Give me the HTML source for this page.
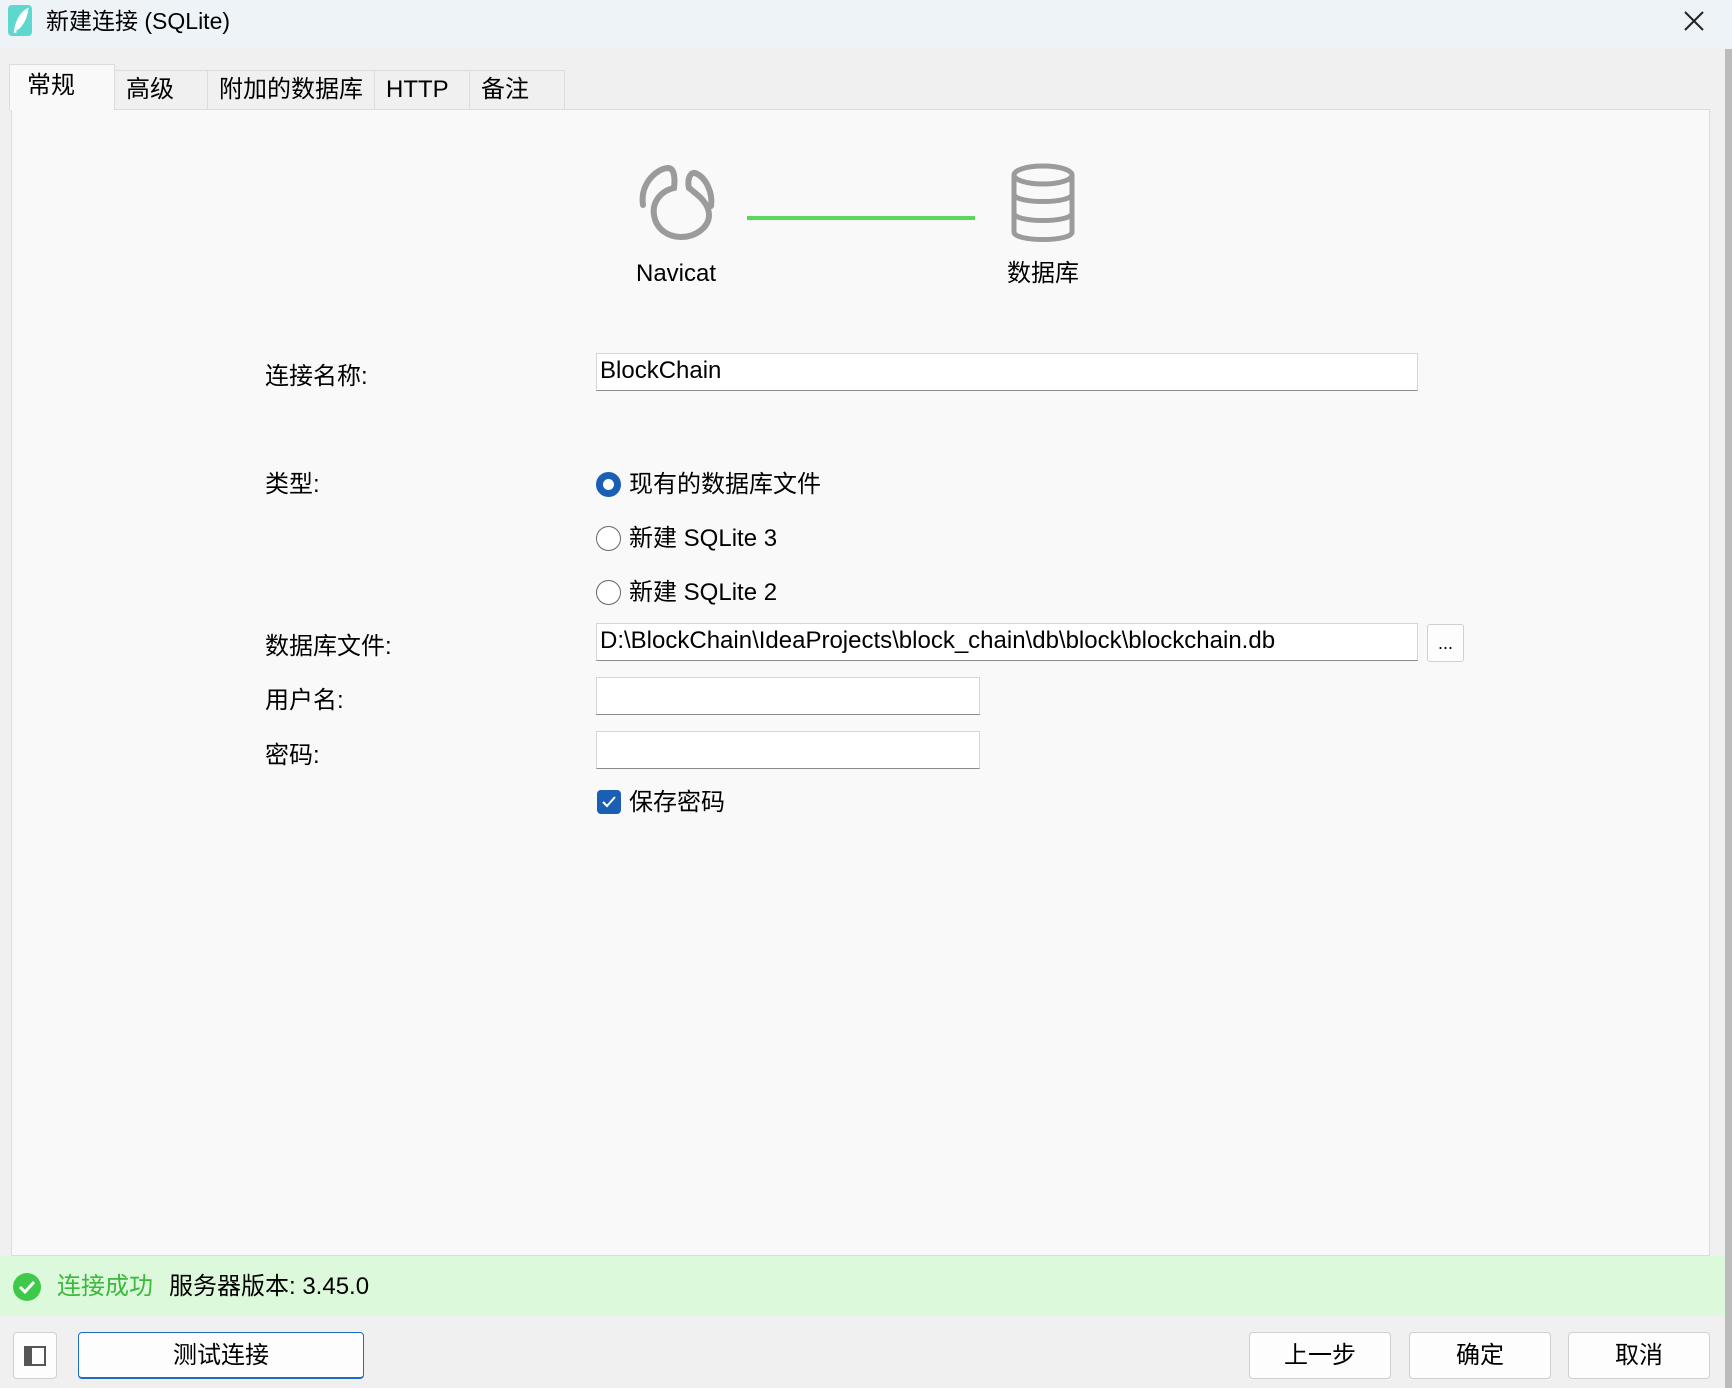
<!DOCTYPE html>
<html><head><meta charset="utf-8"><style>
*{margin:0;padding:0;box-sizing:border-box}
body{width:1732px;height:1388px;background:#f0f0f0;position:relative;overflow:hidden;font-family:"Liberation Sans","Noto Sans CJK SC",sans-serif;color:#000}
.a{position:absolute}
.t{font-size:24px;line-height:30px;white-space:nowrap}
.inp{position:absolute;background:#fff;border:1px solid #d6d6d6;border-bottom:1px solid #8a8a8a;font-size:24px;line-height:34px;padding-left:3px}
.tab{position:absolute;top:70px;height:39px;border:1px solid #dcdcdc;border-bottom:none;background:#f0f0f0;font-size:24px;line-height:38px;padding-left:11px}
.btn{position:absolute;top:1332px;height:47px;background:#fdfdfd;border:1px solid #d0d0d0;border-radius:4px;font-size:24px;line-height:45px;text-align:center}
.radio{position:absolute;width:25px;height:25px;border-radius:50%;border:1.5px solid #666;background:#fff}
</style></head><body>
<div class="a" style="left:0;top:0;width:1732px;height:49px;background:#eef3f8"></div>
<div class="a" style="left:8px;top:5px;width:24px;height:31px;background:#5ed8cf;border-radius:4px"></div>
<svg class="a" style="left:8px;top:5px" width="24" height="31"><path d="M7 28 C8 18 12 9 19 5 C18 13 14 20 9 24" stroke="#fff" stroke-width="2.5" fill="#fff"/></svg>
<div class="a t" style="left:46px;top:6px;font-size:23px">新建连接 (SQLite)</div>
<svg class="a" style="left:1682px;top:9px" width="24" height="24"><path d="M3 3L21 21M21 3L3 21" stroke="#222" stroke-width="2"/></svg>
<div class="a" style="left:1725px;top:49px;width:7px;height:1339px;background:#bbb"></div>
<div class="a" style="left:11px;top:109px;width:1699px;height:1147px;background:#f9f9f9;border:1px solid #dcdcdc"></div>
<div class="tab" style="left:114px;width:94px">高级</div>
<div class="tab" style="left:207px;width:168px">附加的数据库</div>
<div class="tab" style="left:374px;width:96px">HTTP</div>
<div class="tab" style="left:469px;width:96px">备注</div>
<div class="tab" style="left:9px;top:64px;height:46px;width:106px;background:#f9f9f9;line-height:42px;padding-left:17px">常规</div>
<svg class="a" style="left:630px;top:155px" width="100" height="95" fill="none" stroke="#9b9b9b" stroke-width="6" stroke-linecap="round">
<path d="M13 50 C10 30 25 14 38 13 C45 13 45 25 44 33 C30 36 22 48 24 60 C26 74 38 82 51 82 C66 82 79 72 79 60 C79 48 68 40 59 33 C57 25 60 17 65 18 C76 22 83 38 81 51"/>
</svg>
<div class="a" style="left:747px;top:216px;width:228px;height:4px;background:#5bd75f"></div>
<svg class="a" style="left:1010px;top:162px" width="66" height="82" fill="none" stroke="#9b9b9b" stroke-width="5">
<ellipse cx="33" cy="13" rx="29" ry="9"/><path d="M4 13V70C4 80 62 80 62 70V13M4 32C4 42 62 42 62 32M4 51C4 61 62 61 62 51"/>
</svg>
<div class="a t" style="left:636px;top:259px">Navicat</div>
<div class="a t" style="left:1007px;top:259px">数据库</div>
<div class="a t" style="left:265px;top:362px">连接名称:</div>
<div class="inp" style="left:596px;top:353px;width:822px;height:38px">BlockChain</div>
<div class="a t" style="left:265px;top:470px">类型:</div>
<div class="radio" style="left:596px;top:472px;border:7px solid #1a5fb4"></div>
<div class="a t" style="left:629px;top:470px">现有的数据库文件</div>
<div class="radio" style="left:596px;top:526px"></div>
<div class="a t" style="left:629px;top:524px">新建 SQLite 3</div>
<div class="radio" style="left:596px;top:580px"></div>
<div class="a t" style="left:629px;top:578px">新建 SQLite 2</div>
<div class="a t" style="left:265px;top:632px">数据库文件:</div>
<div class="inp" style="left:596px;top:623px;width:822px;height:38px">D:\BlockChain\IdeaProjects\block_chain\db\block\blockchain.db</div>
<div class="a" style="left:1427px;top:624px;width:37px;height:38px;background:#fdfdfd;border:1px solid #d0d0d0;border-radius:3px;text-align:center;font-size:18px;line-height:36px">...</div>
<div class="a t" style="left:265px;top:686px">用户名:</div>
<div class="inp" style="left:596px;top:677px;width:384px;height:38px"></div>
<div class="a t" style="left:265px;top:741px">密码:</div>
<div class="inp" style="left:596px;top:731px;width:384px;height:38px"></div>
<div class="a" style="left:597px;top:790px;width:24px;height:24px;background:#1a5fb4;border-radius:4px"></div>
<svg class="a" style="left:597px;top:790px" width="24" height="24"><path d="M6 12L10 16L18 7" stroke="#fff" stroke-width="2" fill="none"/></svg>
<div class="a t" style="left:629px;top:788px">保存密码</div>
<div class="a" style="left:0;top:1256px;width:1725px;height:60px;background:#dcf9dc"></div>
<div class="a" style="left:13px;top:1273px;width:28px;height:28px;border-radius:50%;background:#3ec94a"></div>
<svg class="a" style="left:13px;top:1273px" width="28" height="28"><path d="M7 14L12 19L21 9" stroke="#fff" stroke-width="3" fill="none"/></svg>
<div class="a t" style="left:57px;top:1272px;color:#3cb83c">连接成功</div>
<div class="a t" style="left:169px;top:1272px">服务器版本: 3.45.0</div>
<div class="btn" style="left:13px;width:44px"></div>
<div class="a" style="left:24px;top:1346px;width:22px;height:20px;border:2px solid #555"></div>
<div class="a" style="left:26px;top:1348px;width:6px;height:16px;background:#555"></div>
<div class="btn" style="left:78px;width:286px;border-color:#1a6fc4;border-bottom:2px solid #1a6fc4">测试连接</div>
<div class="btn" style="left:1249px;width:142px">上一步</div>
<div class="btn" style="left:1409px;width:142px">确定</div>
<div class="btn" style="left:1568px;width:142px">取消</div>
</body></html>
